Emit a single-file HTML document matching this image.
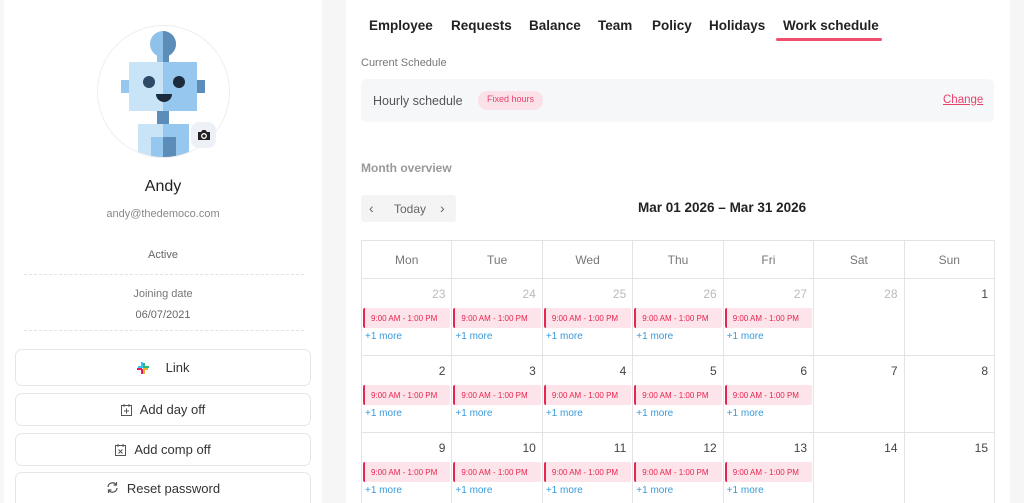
<!DOCTYPE html>
<html style="overflow:hidden;width:1024px;height:503px"><head><style>
*{box-sizing:border-box;margin:0;padding:0}
body{width:1024px;height:503px;overflow:hidden;background:#f6f6f7;font-family:"Liberation Sans",sans-serif;color:#333;position:relative}
.left{position:absolute;left:4px;top:0;width:318px;height:503px;background:#fff}
.right{position:absolute;left:346px;top:0;width:664px;height:503px;background:#fff}
.a{position:absolute}
.btn{position:absolute;left:15px;width:296px;border:1px solid #e6e6e8;border-radius:7px;background:#fff;font-size:13px;color:#333;display:flex;align-items:center;justify-content:center;gap:8px}
.dash{position:absolute;left:24px;width:280px;border-top:1px dashed #e2e2e2}
.tab{position:absolute;top:18px;font-size:13.5px;font-weight:bold;color:#222}
.cal{position:absolute;left:0;top:0;width:1024px;height:503px;overflow:hidden}
table{position:absolute;left:361px;top:240px;border-collapse:collapse;width:634px}
td,th{border:1px solid #e3e3e3;width:90.5px;vertical-align:top;position:relative}
th{height:38px;font-weight:normal;color:#777;font-size:12px;vertical-align:middle}
td{height:77px}
.n{position:absolute;right:6px;top:8px;font-size:12px;color:#444}
.n.g{color:#bbb}
.ev{position:absolute;left:1px;right:1px;top:29px;height:20px;background:#fde4ea;border-left:2px solid #e8244f;border-radius:2px;font-size:8px;color:#e8244f;padding:6px 0 0 6px}
.m{position:absolute;left:3px;top:52px;font-size:10px;color:#3a9ad9}
</style></head><body>
<div class="left"></div>
<div class="a" style="left:97px;top:25px;width:133px;height:133px;border-radius:50%;border:1px solid #eee;overflow:hidden">
  <svg width="133" height="133" viewBox="97 25 133 133" style="position:absolute;left:-1px;top:-1px">
   <ellipse cx="163" cy="44" rx="13" ry="13" fill="#8fc1e9"/>
   <path d="M163 31a13 13 0 0 1 0 26z" fill="#5b8db8"/>
   <rect x="157" y="54" width="6" height="8" fill="#8fc1e9"/><rect x="163" y="54" width="6" height="8" fill="#5b8db8"/>
   <rect x="129" y="62" width="34" height="49" fill="#c9e4f7"/><rect x="163" y="62" width="34" height="49" fill="#95c7ef"/>
   <rect x="121" y="80" width="8" height="13" fill="#95c7ef"/><rect x="197" y="80" width="8" height="13" fill="#5b8db8"/>
   <circle cx="149" cy="82" r="6" fill="#2e4a66"/><circle cx="179" cy="82" r="6" fill="#1c2c3c"/>
   <path d="M156 94h16a8 8 0 0 1-16 0z" fill="#1c2c3c"/>
   <rect x="157" y="111" width="12" height="13" fill="#5b8db8"/>
   <rect x="138" y="124" width="25" height="34" fill="#c9e4f7"/><rect x="163" y="124" width="26" height="34" fill="#95c7ef"/>
   <rect x="151" y="137" width="12" height="21" fill="#95c7ef"/><rect x="163" y="137" width="13" height="21" fill="#5b8db8"/>
  </svg>
</div>
<div class="a" style="left:191px;top:122px;width:25px;height:26px;border-radius:8px;background:#eef0f8"></div>
<svg class="a" style="left:197px;top:129px" width="14" height="12" viewBox="0 0 14 12"><path d="M1 3h3l1.5-2h3L10 3h3v8H1z" fill="#222"/><circle cx="7" cy="7" r="2.3" fill="none" stroke="#fff" stroke-width="1.3"/></svg>
<div class="a" style="left:4px;width:318px;top:178px;text-align:center;font-size:16px;color:#222">Andy</div>
<div class="a" style="left:4px;width:318px;top:208px;text-align:center;font-size:11px;color:#888">andy@thedemoco.com</div>
<div class="a" style="left:4px;width:318px;top:249px;text-align:center;font-size:11px;color:#666">Active</div>
<div class="dash" style="top:274px"></div>
<div class="a" style="left:4px;width:318px;top:288px;text-align:center;font-size:11px;color:#777">Joining date</div>
<div class="a" style="left:4px;width:318px;top:309px;text-align:center;font-size:11px;color:#666">06/07/2021</div>
<div class="dash" style="top:330px"></div>
<div class="btn" style="top:349px;height:37px"><svg width="14" height="14" viewBox="0 0 14 14"><rect x="2" y="5" width="5" height="2" fill="#36c5f0"/><rect x="5" y="1" width="2" height="5" fill="#36c5f0"/><rect x="7" y="2" width="2" height="5" fill="#2eb67d"/><rect x="8" y="5" width="5" height="2" fill="#2eb67d"/><rect x="7" y="7" width="5" height="2" fill="#ecb22e"/><rect x="7" y="8" width="2" height="5" fill="#ecb22e"/><rect x="5" y="8" width="2" height="5" fill="#e01e5a"/><rect x="1" y="7" width="5" height="2" fill="#e01e5a"/></svg>&nbsp;&nbsp;Link</div>
<div class="btn" style="top:393px;height:33px"><svg width="11" height="12"><rect x=".5" y="1.5" width="10" height="10" fill="none" stroke="#555"/><path d="M3 0v3M8 0v3M5.5 4.5v5M3 7h5" stroke="#555"/></svg>Add day off</div>
<div class="btn" style="top:433px;height:33px"><svg width="11" height="12"><rect x=".5" y="1.5" width="10" height="10" fill="none" stroke="#555"/><path d="M3 0v3M8 0v3M3.5 5.5l4 4M7.5 5.5l-4 4" stroke="#555"/></svg>Add comp off</div>
<div class="btn" style="top:472px;height:40px;align-items:flex-start;padding-top:8px"><svg width="13" height="13" viewBox="0 0 13 13"><path d="M2 6a4.5 4.5 0 0 1 8-2.5M11 7a4.5 4.5 0 0 1-8 2.5" fill="none" stroke="#555" stroke-width="1.2"/><path d="M10.5 1v3h-3M2.5 12V9h3" fill="none" stroke="#555" stroke-width="1.2"/></svg>Reset password</div>

<div class="right"></div>
<div class="tab" style="left:369px">Employee</div>
<div class="tab" style="left:451px">Requests</div>
<div class="tab" style="left:529px">Balance</div>
<div class="tab" style="left:598px">Team</div>
<div class="tab" style="left:652px">Policy</div>
<div class="tab" style="left:709px">Holidays</div>
<div class="tab" style="left:783px">Work schedule</div>
<div class="a" style="left:776px;top:38px;width:106px;height:3px;background:#f0506e;border-radius:2px"></div>
<div class="a" style="left:361px;top:57px;font-size:11px;color:#777">Current Schedule</div>
<div class="a" style="left:361px;top:79px;width:633px;height:43px;background:#f6f7f9;border-radius:6px"></div>
<div class="a" style="left:373px;top:94px;font-size:12.5px;color:#555">Hourly schedule</div>
<div class="a" style="left:478px;top:91px;width:65px;height:19px;background:#fbe1e8;border-radius:9px;font-size:9px;color:#e8426a;text-align:center;padding-top:3px">Fixed hours</div>
<div class="a" style="left:943px;top:94px;font-size:11.5px;color:#e8426a;text-decoration:underline">Change</div>
<div class="a" style="left:361px;top:161px;font-size:12px;font-weight:bold;color:#999">Month overview</div>
<div class="a" style="left:361px;top:195px;width:95px;height:27px;background:#f4f4f5;border-radius:3px;font-size:12px;color:#666"><span class="a" style="left:8px;top:5px;font-size:14px">‹</span><span class="a" style="left:33px;top:7px">Today</span><span class="a" style="left:79px;top:5px;font-size:14px">›</span></div>
<div class="a" style="left:638px;top:200px;font-size:13.5px;font-weight:bold;color:#222">Mar 01 2026 – Mar 31 2026</div>
<div class="cal">
<table>
<tr><th>Mon</th><th>Tue</th><th>Wed</th><th>Thu</th><th>Fri</th><th>Sat</th><th>Sun</th></tr>
<tr>
<td><span class="n g">23</span><div class="ev">9:00 AM - 1:00 PM</div><span class="m">+1 more</span></td>
<td><span class="n g">24</span><div class="ev">9:00 AM - 1:00 PM</div><span class="m">+1 more</span></td>
<td><span class="n g">25</span><div class="ev">9:00 AM - 1:00 PM</div><span class="m">+1 more</span></td>
<td><span class="n g">26</span><div class="ev">9:00 AM - 1:00 PM</div><span class="m">+1 more</span></td>
<td><span class="n g">27</span><div class="ev">9:00 AM - 1:00 PM</div><span class="m">+1 more</span></td>
<td><span class="n g">28</span></td><td><span class="n">1</span></td></tr>
<tr>
<td><span class="n">2</span><div class="ev">9:00 AM - 1:00 PM</div><span class="m">+1 more</span></td>
<td><span class="n">3</span><div class="ev">9:00 AM - 1:00 PM</div><span class="m">+1 more</span></td>
<td><span class="n">4</span><div class="ev">9:00 AM - 1:00 PM</div><span class="m">+1 more</span></td>
<td><span class="n">5</span><div class="ev">9:00 AM - 1:00 PM</div><span class="m">+1 more</span></td>
<td><span class="n">6</span><div class="ev">9:00 AM - 1:00 PM</div><span class="m">+1 more</span></td>
<td><span class="n">7</span></td><td><span class="n">8</span></td></tr>
<tr>
<td><span class="n">9</span><div class="ev">9:00 AM - 1:00 PM</div><span class="m">+1 more</span></td>
<td><span class="n">10</span><div class="ev">9:00 AM - 1:00 PM</div><span class="m">+1 more</span></td>
<td><span class="n">11</span><div class="ev">9:00 AM - 1:00 PM</div><span class="m">+1 more</span></td>
<td><span class="n">12</span><div class="ev">9:00 AM - 1:00 PM</div><span class="m">+1 more</span></td>
<td><span class="n">13</span><div class="ev">9:00 AM - 1:00 PM</div><span class="m">+1 more</span></td>
<td><span class="n">14</span></td><td><span class="n">15</span></td></tr>
</table>
</div>
</body></html>
